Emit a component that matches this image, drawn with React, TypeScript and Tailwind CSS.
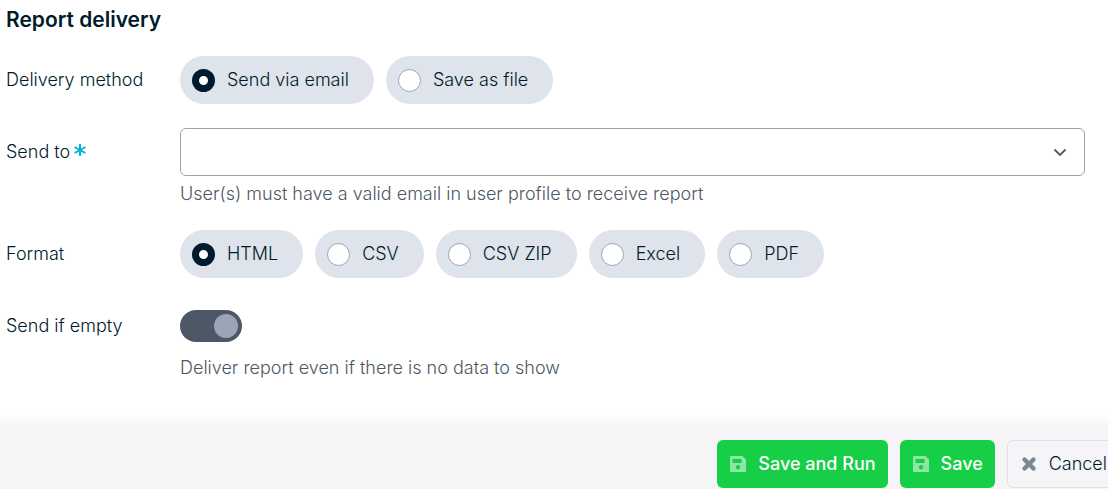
import { useState } from "react";
import type { ReactNode } from "react";

const deliveryMethods = [
  { label: "Send via email", value: "email" },
  { label: "Save as file", value: "file" },
];

const formats = [
  { label: "HTML", value: "html" },
  { label: "CSV", value: "csv" },
  { label: "CSV ZIP", value: "csv-zip" },
  { label: "Excel", value: "excel" },
  { label: "PDF", value: "pdf" },
];

export default function App() {
  const [method, setMethod] = useState("email");
  const [format, setFormat] = useState("html");
  const [sendIfEmpty, setSendIfEmpty] = useState(true);

  return (
    <div className="flex min-h-screen flex-col overflow-hidden bg-white font-['Inter',sans-serif] text-lg font-light text-[#001b2b]">
      <main className="grow pb-11 pl-1.5 pr-[23px] pt-1.5">
        <h1 className="mb-[22px] text-[21px] font-semibold leading-7">
          Report delivery
        </h1>

        <FormRow label={<span id="method-label">Delivery method</span>}>
          <RadioGroup
            name="method"
            options={deliveryMethods}
            value={method}
            onChange={setMethod}
          />
        </FormRow>

        <div className="mt-6">
          <FormRow
            label={
              <label htmlFor="send-to" className="flex items-center gap-1">
                Send to
                <RequiredMark />
              </label>
            }
          >
            <div className="relative">
              <select
                id="send-to"
                required
                aria-describedby="send-to-help"
                className="block h-12 w-full appearance-none rounded-md border border-[#9ca3b5] bg-white px-3"
              >
                <option value=""></option>
              </select>
              <svg
                className="pointer-events-none absolute right-[18px] top-[18px] size-3.5"
                viewBox="0 0 14 14"
                fill="none"
                stroke="#4c5866"
                strokeWidth="1.8"
              >
                <path d="M1.5 3.5 7 9l5.5-5.5" />
              </svg>
            </div>
            <p id="send-to-help" className="mt-1 text-[#4c5866]">
              User(s) must have a valid email in user profile to receive report
            </p>
          </FormRow>
        </div>

        <div className="mt-[22px]">
          <FormRow label={<span id="format-label">Format</span>}>
            <RadioGroup
              name="format"
              options={formats}
              value={format}
              onChange={setFormat}
            />
          </FormRow>
        </div>

        <div className="mt-6">
          <FormRow label={<label htmlFor="send-if-empty">Send if empty</label>}>
            <div className="flex h-12 items-center">
              <input
                id="send-if-empty"
                type="checkbox"
                role="switch"
                checked={sendIfEmpty}
                onChange={(event) => setSendIfEmpty(event.target.checked)}
                className="h-8 w-[62px] appearance-none rounded-full bg-[#9ca3b5] p-1 before:block before:size-6 before:rounded-full before:bg-white checked:bg-[#4c5866] checked:before:ml-[30px] checked:before:bg-[#9ca3b5]"
              />
            </div>
            <p className="mt-1 text-[#4c5866]">
              Deliver report even if there is no data to show
            </p>
          </FormRow>
        </div>
      </main>

      <footer className="-ml-6 -mr-3 flex justify-end gap-3 bg-[#f5f5f8] pb-px pt-3 shadow-[0_0_16px_2px_rgba(0,0,0,0.08)]">
        <button
          type="button"
          className="flex h-12 shrink-0 items-center gap-3 rounded-md bg-[#17ce47] px-3 text-white"
        >
          <SaveIcon />
          <span className="font-medium">Save and Run</span>
        </button>
        <button
          type="button"
          className="flex h-12 shrink-0 items-center gap-3 rounded-md bg-[#17ce47] px-3 text-white"
        >
          <SaveIcon />
          <span className="font-medium">Save</span>
        </button>
        <button
          type="button"
          className="flex h-12 shrink-0 items-center gap-3 rounded-md border border-[#dfe1e6] px-3"
        >
          <CancelIcon />
          Cancel
        </button>
      </footer>
    </div>
  );
}

function FormRow({ label, children }: { label: ReactNode; children: ReactNode }) {
  return (
    <div className="flex">
      <div className="flex h-12 w-[174px] shrink-0 items-center">{label}</div>
      <div className="min-w-0 grow">{children}</div>
    </div>
  );
}

type RadioGroupProps = {
  name: string;
  options: { label: string; value: string }[];
  value: string;
  onChange: (value: string) => void;
};

function RadioGroup({ name, options, value, onChange }: RadioGroupProps) {
  return (
    <div
      role="radiogroup"
      aria-labelledby={`${name}-label`}
      className="flex flex-wrap gap-3"
    >
      {options.map((option) => (
        <label
          key={option.value}
          className="flex h-12 items-center gap-3 rounded-full bg-[#dfe3ec] pl-3 pr-[25px]"
        >
          <input
            type="radio"
            name={name}
            value={option.value}
            checked={value === option.value}
            onChange={() => onChange(option.value)}
            className="size-[23px] appearance-none rounded-full border border-[#9ca3b5] bg-white checked:border-[7px] checked:border-[#001b2b]"
          />
          {option.label}
        </label>
      ))}
    </div>
  );
}

function RequiredMark() {
  return (
    <svg
      className="mb-1 size-3"
      viewBox="0 0 12 12"
      stroke="#00b5e2"
      strokeWidth="2"
      aria-hidden="true"
    >
      <path d="M6 0v12M.6 3l10.8 6M.6 9l10.8-6" />
    </svg>
  );
}

function SaveIcon() {
  return (
    <svg className="ml-px size-4" viewBox="0 0 16 16" aria-hidden="true">
      <path
        fill="#fff"
        fillOpacity=".5"
        fillRule="evenodd"
        d="M1 0h11.5L16 3.5V15a1 1 0 0 1-1 1H1a1 1 0 0 1-1-1V1a1 1 0 0 1 1-1Zm1.500 3v4h9V3h-9ZM8 9a2.200 2.200 0 1 0 0 4.400A2.200 2.200 0 0 0 8 9Z"
      />
    </svg>
  );
}

function CancelIcon() {
  return (
    <svg
      className="ml-px size-4"
      viewBox="0 0 16 16"
      stroke="#7d8790"
      strokeWidth="4.4"
      strokeLinecap="round"
      aria-hidden="true"
    >
      <path d="m3.500 3.500 9 9M12.500 3.500l-9 9" />
    </svg>
  );
}
